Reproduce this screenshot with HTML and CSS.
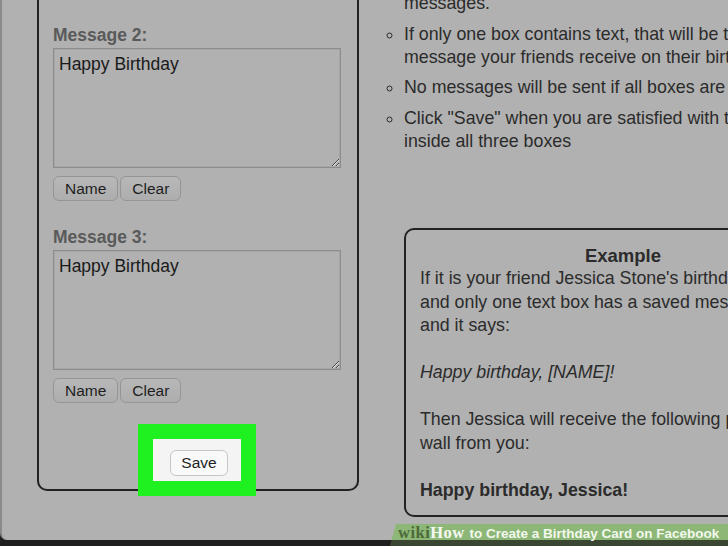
FILE: index.html
```html
<!DOCTYPE html>
<html lang="en">
<head>
    <meta charset="UTF-8">
    <title>Birthday Messages</title>
    <link rel="stylesheet" href="styles.css">
</head>
<body>

    <div class="screen">
        <div class="layout">

            <section class="panel">
                <div class="field">
                    <label class="field-label" for="msg2">Message 2:</label>
                    <textarea class="field-text" id="msg2">Happy Birthday</textarea>
                    <div class="field-actions">
                        <button class="btn">Name</button>
                        <button class="btn">Clear</button>
                    </div>
                </div>

                <div class="field field-next">
                    <label class="field-label" for="msg3">Message 3:</label>
                    <textarea class="field-text" id="msg3">Happy Birthday</textarea>
                    <div class="field-actions">
                        <button class="btn">Name</button>
                        <button class="btn">Clear</button>
                    </div>
                </div>

                <div class="save-mark">
                    <div class="save-inner">
                        <button class="btn-save">Save</button>
                    </div>
                </div>
            </section>

            <section class="info">
                <ul class="tips">
                    <li>Press "Name" to insert your friend's name into your<br>messages.</li>
                    <li>If only one box contains text, that will be the<br>message your friends receive on their birthday</li>
                    <li>No messages will be sent if all boxes are empty</li>
                    <li>Click "Save" when you are satisfied with the text<br>inside all three boxes</li>
                </ul>

                <div class="example">
                    <h3 class="example-title">Example</h3>
                    <p>If it is your friend Jessica Stone's birthday,<br>and only one text box has a saved message,<br>and it says:</p>
                    <p><em>Happy birthday, [NAME]!</em></p>
                    <p>Then Jessica will receive the following post on her<br>wall from you:</p>
                    <p><strong>Happy birthday, Jessica!</strong></p>
                </div>
            </section>

        </div>
    </div>

    <div class="watermark">
        <span class="wm-wiki">wiki</span><span class="wm-how">How</span> to Create a Birthday Card on Facebook
    </div>

</body>
</html>
```

FILE: styles.css
```css
/* --- Variables --- */
:root {
    --font-body: 'Liberation Sans', Arial, sans-serif;
    --font-serif: 'Liberation Serif', 'Times New Roman', serif;
    --color-bg: #b1b1b1;
    --color-frame: #1f1f1f;
    --color-line: #222222;
    --color-text: #2b2b2b;
    --color-label: #5a5a5a;
    --color-mark: #1ff01f;
}

/* --- Base --- */
html, body { margin: 0; height: 100%; }
body {
    background-color: var(--color-frame);
    font-family: var(--font-body);
    color: var(--color-text);
    overflow: hidden;
    position: relative;
}
* { box-sizing: border-box; }

.screen {
    height: 540px;
    background-color: var(--color-bg);
    border-left: 2px solid #8a8a8a;
    border-bottom-left-radius: 7px;
    overflow: hidden;
}
.layout { display: flex; align-items: flex-start; padding-left: 35px; }

/* --- Left panel --- */
.panel {
    flex: none;
    width: 322px;
    border: 2px solid var(--color-line);
    border-top: none;
    border-radius: 0 0 10px 10px;
    padding: 25px 16px 0 14px;
}
.field-next { margin-top: 26px; }
.field-label {
    display: block;
    font-size: 17.5px;
    line-height: 20px;
    font-weight: bold;
    color: var(--color-label);
    margin-bottom: 3px;
}
.field-text {
    display: block;
    width: 288px;
    height: 120px;
    margin: 0;
    padding: 5px 5px;
    border: 1px solid #8d8d8d;
    box-shadow: inset 0 0 0 1px #a6a6a6;
    background: transparent;
    font-family: var(--font-body);
    font-size: 17.5px;
    color: #1a1a1a;
}
.field-actions { display: flex; gap: 2px; margin-top: 8px; }
.btn {
    height: 25px;
    padding: 0 11px;
    border: 1px solid #959595;
    border-radius: 6px;
    background: linear-gradient(#b8b8b8, #adadad);
    font-family: var(--font-body);
    font-size: 15.5px;
    color: #1e1e1e;
}

/* --- Save highlight --- */
.save-mark {
    width: 118px;
    height: 72px;
    margin: 21px auto -7px;
    border: 15px solid var(--color-mark);
    background-color: #f4f4f4;
}
.save-inner { padding: 11px 0 0 17px; }
.btn-save {
    display: block;
    width: 58px;
    height: 26px;
    padding: 0;
    border: 1px solid #c6c6c6;
    border-radius: 6px;
    background-color: #f9f9f9;
    font-family: var(--font-body);
    font-size: 15.5px;
    color: #1e1e1e;
}

/* --- Right column --- */
.info { flex: none; width: 440px; margin-left: 45px; }
.tips {
    margin: -31px 0 0;
    padding: 0;
    list-style: circle outside;
    font-size: 17.8px;
    line-height: 23px;
    white-space: nowrap;
}
.tips li { margin-bottom: 7.5px; }
.tips li:last-child { margin-bottom: 0; }

.example {
    width: 438px;
    margin-top: 75.5px;
    padding: 14px 14px 13px;
    border: 2px solid var(--color-line);
    border-radius: 10px;
    font-size: 17.8px;
    line-height: 23.5px;
    white-space: nowrap;
}
.example-title {
    margin: 0;
    font-size: 18.5px;
    line-height: 23px;
    text-align: center;
}
.example p { margin: 0 0 23.5px; }
.example p:last-child { margin-bottom: 0; }

/* --- wikiHow watermark --- */
.watermark {
    position: absolute;
    left: 390px;
    top: 524px;
    width: 338px;
    height: 22px;
    padding-left: 8px;
    background: linear-gradient(#8db777 0 16px, #3a4632 16px);
    clip-path: polygon(6px 0, 100% 0, 100% 100%, 0 100%);
    font-size: 13.5px;
    line-height: 18px;
    font-weight: bold;
    color: #f3f8ee;
    white-space: nowrap;
}
.wm-wiki, .wm-how { font-family: var(--font-serif); font-size: 16.5px; letter-spacing: 0.5px; }
.wm-wiki { color: #4c6a38; }
.wm-how { color: #f6f9f2; margin-right: 1px; }
```
